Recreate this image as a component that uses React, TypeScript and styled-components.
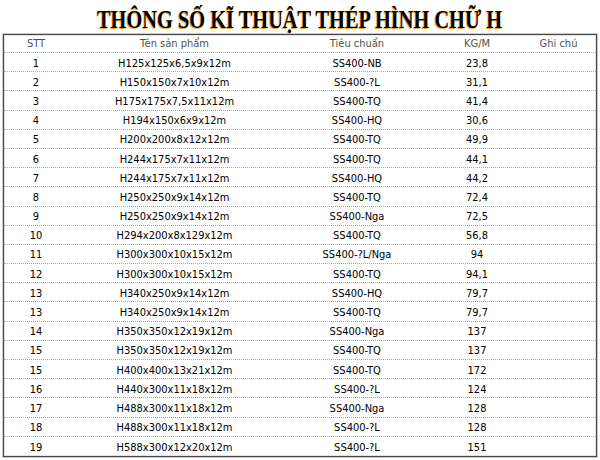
import React from "react";
import styled, { createGlobalStyle } from "styled-components";

const Global = createGlobalStyle`
  html, body { margin: 0; padding: 0; background: #ffffff; }
  #root { width: 600px; }
`;

const Page = styled.div`
  width: 600px;
  height: 460px;
  display: flex;
  flex-direction: column;
  background: #ffffff;
`;

const Title = styled.h1`
  margin: 0;
  height: 34px;
  display: flex;
  align-items: center;
  justify-content: center;
  padding-top: 5px;
  box-sizing: border-box;
  font-family: "Liberation Serif", "Times New Roman", serif;
  font-weight: bold;
  font-size: 25px;
  color: #000;
  text-shadow: -1px 1px 1px #f0a020;
`;

const TitleText = styled.span`
  display: inline-block;
  white-space: nowrap;
  transform: scaleX(0.815);
`;

const Table = styled.div`
  margin: 0 3px;
  border: 1px solid #4a4a4a;
  box-shadow: 0 0 0 1px #c8c8c8, inset 0 0 0 1px #e2e2e2;
  display: flex;
  flex-direction: column;
  font-family: "DejaVu Sans Condensed", "Liberation Sans", sans-serif;
  font-size: 11px;
`;

const Row = styled.div<{ $head?: boolean; $last?: boolean }>`
  display: grid;
  grid-template-columns: 64px 213px 152px 88px 1fr;
  align-items: center;
  box-sizing: border-box;
  height: ${(p) => (p.$head ? "18px" : "19.2px")};
  padding-top: ${(p) => (p.$head ? "0" : "2px")};
  border-bottom: ${(p) => (p.$last ? "none" : "1px dotted #86ade0")};
  color: ${(p) => (p.$head ? "#4f4f4f" : "#000000")};
`;

const Cell = styled.div`
  text-align: center;
  white-space: nowrap;
  line-height: 1;
`;

const rows: [string, string, string, string][] = [
  ["1", "H125x125x6,5x9x12m", "SS400-NB", "23,8"],
  ["2", "H150x150x7x10x12m", "SS400-?L", "31,1"],
  ["3", "H175x175x7,5x11x12m", "SS400-TQ", "41,4"],
  ["4", "H194x150x6x9x12m", "SS400-HQ", "30,6"],
  ["5", "H200x200x8x12x12m", "SS400-TQ", "49,9"],
  ["6", "H244x175x7x11x12m", "SS400-TQ", "44,1"],
  ["7", "H244x175x7x11x12m", "SS400-HQ", "44,2"],
  ["8", "H250x250x9x14x12m", "SS400-TQ", "72,4"],
  ["9", "H250x250x9x14x12m", "SS400-Nga", "72,5"],
  ["10", "H294x200x8x129x12m", "SS400-TQ", "56,8"],
  ["11", "H300x300x10x15x12m", "SS400-?L/Nga", "94"],
  ["12", "H300x300x10x15x12m", "SS400-TQ", "94,1"],
  ["13", "H340x250x9x14x12m", "SS400-HQ", "79,7"],
  ["13", "H340x250x9x14x12m", "SS400-TQ", "79,7"],
  ["14", "H350x350x12x19x12m", "SS400-Nga", "137"],
  ["15", "H350x350x12x19x12m", "SS400-TQ", "137"],
  ["15", "H400x400x13x21x12m", "SS400-TQ", "172"],
  ["16", "H440x300x11x18x12m", "SS400-?L", "124"],
  ["17", "H488x300x11x18x12m", "SS400-Nga", "128"],
  ["18", "H488x300x11x18x12m", "SS400-?L", "128"],
  ["19", "H588x300x12x20x12m", "SS400-?L", "151"],
];

export default function App() {
  return (
    <Page>
      <Global />
      <Title>
        <TitleText>THÔNG SỐ KĨ THUẬT THÉP HÌNH CHỮ H</TitleText>
      </Title>
      <Table>
        <Row $head>
          <Cell>STT</Cell>
          <Cell>Tên sản phẩm</Cell>
          <Cell>Tiêu chuẩn</Cell>
          <Cell>KG/M</Cell>
          <Cell>Ghi chú</Cell>
        </Row>
        {rows.map((r, i) => (
          <Row key={i} $last={i === rows.length - 1}>
            <Cell>{r[0]}</Cell>
            <Cell>{r[1]}</Cell>
            <Cell>{r[2]}</Cell>
            <Cell>{r[3]}</Cell>
            <Cell></Cell>
          </Row>
        ))}
      </Table>
    </Page>
  );
}
